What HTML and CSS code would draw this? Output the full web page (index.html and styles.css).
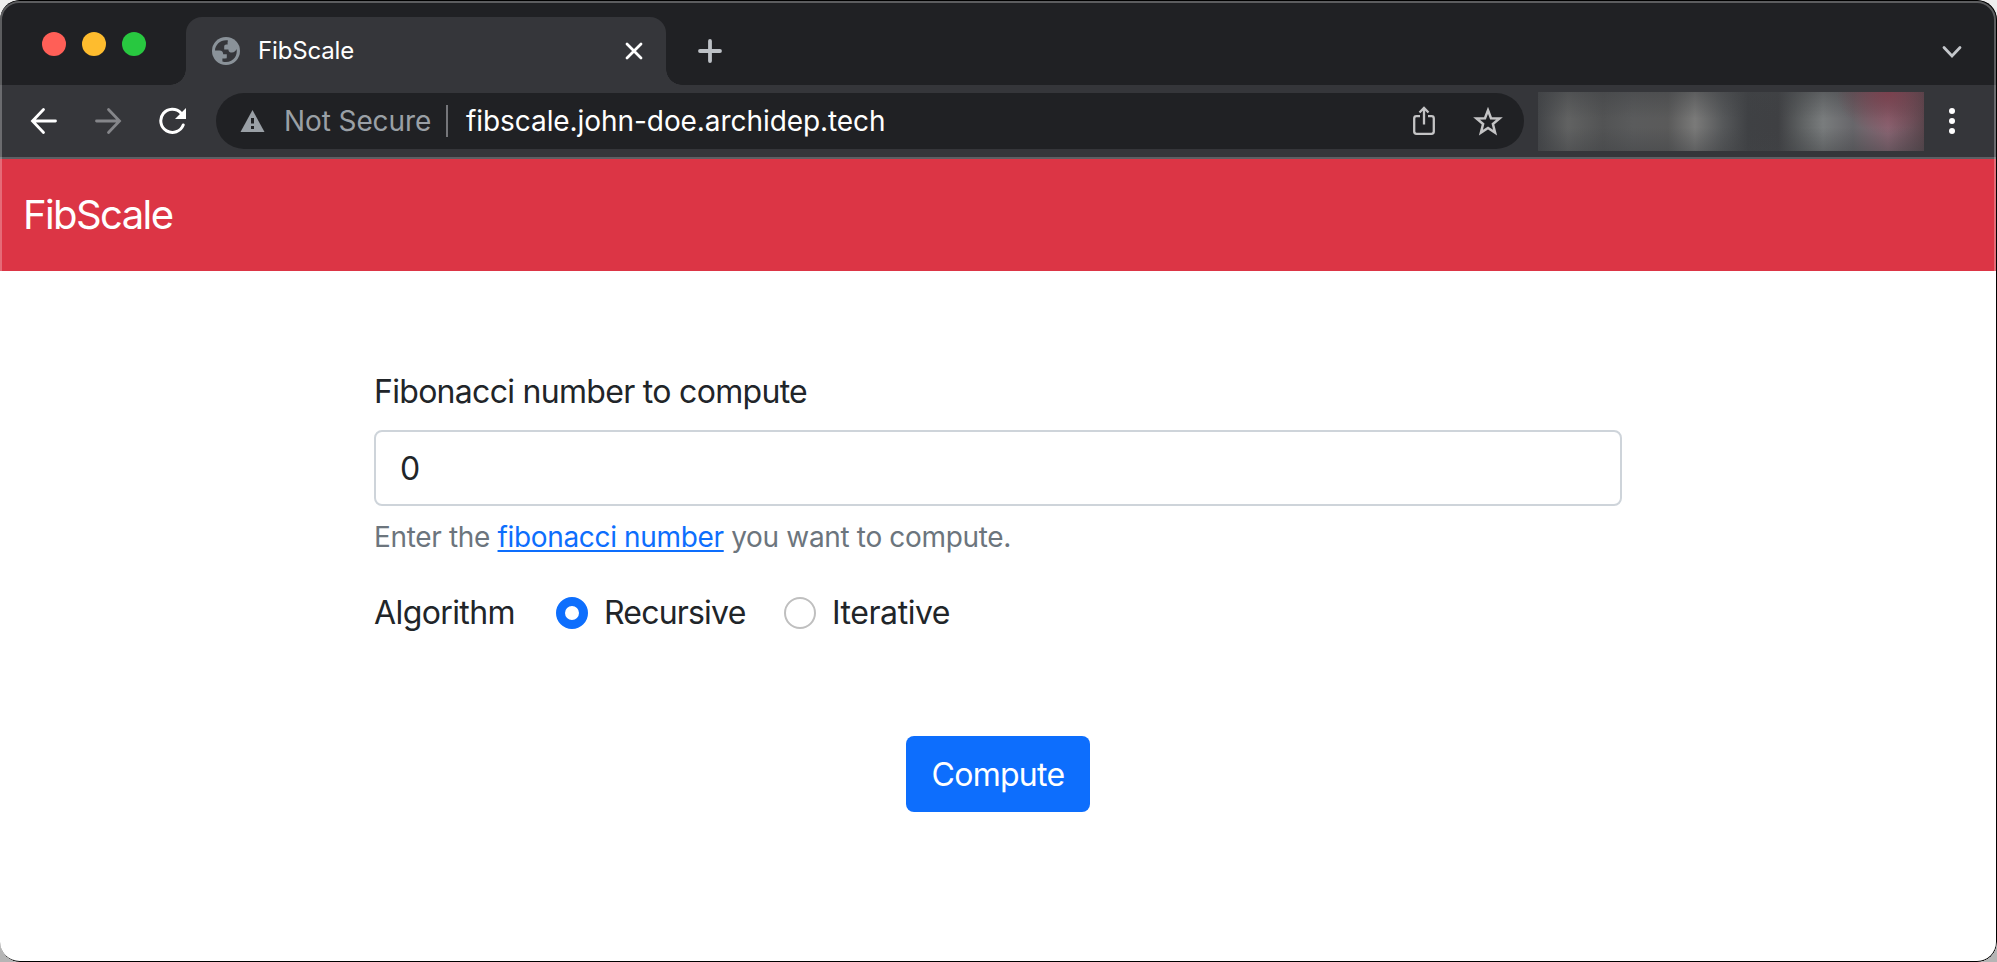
FILE: index.html
```html
<!DOCTYPE html>
<html lang="en">
<head>
<meta charset="utf-8">
<title>FibScale</title>
<link rel="stylesheet" href="styles.css">
</head>
<body>
<div class="window">
  <header class="tabstrip">
    <div class="lights"><span class="light close"></span><span class="light minimize"></span><span class="light maximize"></span></div>
    <div class="tab">
      <svg class="globe" viewBox="0 0 28 28"><circle cx="14" cy="14" r="14" fill="#8a9299"/><path d="M16 3.400C9 2.300 3 7.500 3 13.600H7.500C10 13.600 11.200 15.200 11.200 17.200H14.800V20.200C14.800 21 14.200 21.400 13.400 21.400H10.400V24.500C15.500 26.200 20.500 24 22.900 20.500C24.700 17.800 25 14.800 24.600 12C23.500 14.300 22.300 15.500 20 15.500C18 15.500 16.400 14.600 16.400 12.400H12.200V9.600C12.200 8.200 13 7.500 14.300 7.500H15.600V5.200Z" fill="#35363a"/></svg>
      <span class="tab-title">FibScale</span>
      <svg class="tab-close" viewBox="0 0 18 18"><path d="M2 2L16 16M16 2L2 16" stroke="#fff" stroke-width="2.800" stroke-linecap="round"/></svg>
    </div>
    <svg class="new-tab" viewBox="0 0 24 24"><path d="M12 2V22M2 12H22" stroke="#bdc1c6" stroke-width="3.800" stroke-linecap="round"/></svg>
    <svg class="chevron" viewBox="0 0 20 14"><path d="M2 2.500L10 11L18 2.500" fill="none" stroke="#c4c7cb" stroke-width="2.800" stroke-linecap="round"/></svg>
  </header>
  <nav class="toolbar">
    <svg class="nav-icon back" viewBox="0 0 28 28"><path d="M25.500 14H3M13.500 2.500L2.500 14L13.500 25.500" fill="none" stroke="#fff" stroke-width="2.800" stroke-linecap="round"/></svg>
    <svg class="nav-icon forward" viewBox="0 0 28 28"><path d="M2.500 14H25M14.500 2.500L25.500 14L14.500 25.500" fill="none" stroke="#85868a" stroke-width="2.800" stroke-linecap="round"/></svg>
    <svg class="nav-icon reload" viewBox="0 0 28 28"><path d="M22.900 5.900A11.600 11.600 0 1 0 25.200 18" fill="none" stroke="#fff" stroke-width="3" stroke-linecap="round"/><path d="M28 1V12H17Z" fill="#fff"/></svg>
    <div class="address">
      <svg class="warning" viewBox="0 0 24 22"><path d="M12 0L24 22H0Z" fill="#9aa0a6"/><path d="M10.500 8H13.500V13.500H10.500ZM10.500 16H13.500V19H10.500Z" fill="#202124"/></svg>
      <span class="insecure">Not Secure</span>
      <span class="divider"></span>
      <span class="url">fibscale.john-doe.archidep.tech</span>
      <svg class="share" viewBox="0 0 24 30"><path d="M8 10.200H4.500Q2.200 10.200 2.200 12.500V25.500Q2.200 27.800 4.500 27.800H19.500Q21.800 27.800 21.800 25.500V12.500Q21.800 10.200 19.500 10.200H16M12 18.500V3M7.500 6.500L12 2L16.500 6.500" fill="none" stroke="#c4c4c5" stroke-width="2.300"/></svg>
      <svg class="star" viewBox="0 0 30 29"><path d="M15 3.300L18 11.300L26.500 11.500L19.900 17L22.100 25.600L15 21L7.900 25.600L10.100 17L3.500 11.500L12 11.300Z" fill="none" stroke="#c4c4c5" stroke-width="2.500"/></svg>
    </div>
    <div class="extensions"></div>
    <div class="menu"><span class="dot"></span><span class="dot"></span><span class="dot"></span></div>
  </nav>
  <div class="navbar">FibScale</div>
  <main class="page">
    <form class="form">
      <label class="label" for="number">Fibonacci number to compute</label>
      <input class="input" id="number" type="text" value="0">
      <div class="help">Enter the <a class="link" href="#">fibonacci number</a> you want to compute.</div>
      <div class="algorithm">
        <span class="algorithm-name">Algorithm</span>
        <label class="choice first"><span class="radio checked"></span>Recursive</label>
        <label class="choice second"><span class="radio"></span>Iterative</label>
      </div>
      <button class="submit" type="button">Compute</button>
    </form>
  </main>
  <div class="frame"></div>
</div>
</body>
</html>
```
FILE: styles.css
```css
* { box-sizing: border-box; }
body { margin: 0; background: linear-gradient(#eee 0 50%, #b5b5b5 50%); font-family: Inter, "Liberation Sans", sans-serif; font-weight: 400; color: #212529; }
svg { display: block; flex: none; }
.window { position: relative; width: 1997px; height: 962px; overflow: hidden; border-radius: 20px; background: #fff; display: flex; flex-direction: column; }
.frame { position: absolute; inset: 0; border: 1px solid #000; border-left: 0; border-radius: 20px; pointer-events: none; }
.frame::after { content: ""; position: absolute; inset: 0; border: 2px solid rgba(255, 255, 255, .27); border-radius: 19px; }
.tabstrip { height: 85px; flex: none; background: #202124; display: flex; padding: 17px 35px 0 42px; }
.lights { display: flex; gap: 16px; width: 144px; padding-top: 15px; }
.light { width: 24px; height: 24px; border-radius: 50%; }
.close { background: #ff5f57; }
.minimize { background: #febc2e; }
.maximize { background: #28c840; }
.tab { position: relative; width: 480px; height: 68px; border-radius: 16px 16px 0 0; background: #35363a; display: flex; align-items: center; padding: 0 23px 0 26px; }
.tab::before, .tab::after { content: ""; position: absolute; bottom: 0; width: 16px; height: 16px; }
.tab::before { left: -16px; background: radial-gradient(circle at 0 0, transparent 15.5px, #35363a 16px); }
.tab::after { right: -16px; background: radial-gradient(circle at 100% 0, transparent 15.5px, #35363a 16px); }
.globe { width: 28px; height: 28px; }
.tab-title { flex: 1; margin-left: 18px; padding-bottom: 2px; font-size: 24px; letter-spacing: -.15px; color: #fff; }
.tab-close { width: 18px; height: 18px; }
.new-tab { width: 24px; height: 24px; margin: 22px 0 0 32px; }
.chevron { width: 20px; height: 14px; margin: 28px 0 0 auto; }
.toolbar { height: 74px; flex: none; background: #35363a; border-bottom: 2px solid #5e5f63; display: flex; align-items: center; padding-left: 30px; }
.nav-icon { width: 28px; height: 28px; }
.forward { margin-left: 36px; }
.reload { margin-left: 36px; }
.address { width: 1308px; height: 56px; margin-left: 30px; border-radius: 28px; background: #202124; display: flex; align-items: center; padding: 0 21px 0 24px; font-size: 28px; }
.warning { width: 25px; height: 22px; }
.insecure { width: 160px; margin-left: 19px; letter-spacing: -.1px; color: #9aa0a6; }
.divider { width: 2px; height: 32px; margin-left: 2px; background: #75767a; }
.url { flex: 1; margin-left: 18px; letter-spacing: -.07px; color: #fff; white-space: nowrap; }
.share { width: 24px; height: 30px; }
.star { width: 30px; height: 29px; margin-left: 37px; }
/* Blurred extension icons */
.extensions {
  width: 386px; height: 59px; margin-left: 14px;
  background:
    radial-gradient(ellipse 52px 42px at 350px 0, rgba(126, 62, 76, .85), rgba(126, 62, 76, 0)),
    linear-gradient(rgba(64, 66, 69, .5), rgba(64, 66, 69, 0) 45%, rgba(64, 66, 69, 0) 60%, rgba(64, 66, 69, .45)),
    linear-gradient(90deg, #434548, #616262 30px, #525354 65px, #5a5b5c 95px, #5a5a5a 130px, #7a7a79 157px, #56585a 185px, #3f4144 210px, #3f4043 240px, #606364 265px, #797c7d 285px, #67666a 315px, #8b6674 350px, #5a454c 386px);
}
.menu { display: flex; flex-direction: column; gap: 4px; margin-left: 25px; }
.dot { width: 6px; height: 6px; border-radius: 50%; background: #fff; }
.navbar { height: 112px; flex: none; padding-left: 23px; background: #dc3545; color: #fff; font-size: 40px; font-weight: 420; line-height: 111px; letter-spacing: -1.6px; }
.page { flex: 1; padding: 97px 375px 0 374px; }
.form { font-size: 32px; line-height: 48px; letter-spacing: -.7px; }
.label { display: block; margin-bottom: 14px; }
.input { display: block; width: 100%; height: 76px; padding: 0 24px; border: 2px solid #ced4da; border-radius: 8px; background: #fff; color: #212529; font: inherit; }
.help { margin-top: 10px; height: 42px; line-height: 42px; font-size: 28px; letter-spacing: -.34px; color: #6c757d; }
.link { color: #0d6efd; text-underline-offset: 3px; text-decoration-thickness: 2px; }
.algorithm { display: flex; margin-top: 31px; }
.algorithm-name { width: 182px; letter-spacing: -.6px; }
.choice { display: flex; align-items: center; }
.first { width: 228px; letter-spacing: -.8px; }
.second { letter-spacing: -.45px; }
.radio { width: 32px; height: 32px; margin-right: 16px; border: 2px solid #bfbfbf; border-radius: 50%; }
.checked { border: 9px solid #0d6efd; }
.submit { display: block; width: 184px; height: 76px; margin: 99px auto 0; padding: 1px 0 0; border: 0; border-radius: 8px; background: #0d6efd; color: #fff; font: inherit; letter-spacing: -.7px; }
```
